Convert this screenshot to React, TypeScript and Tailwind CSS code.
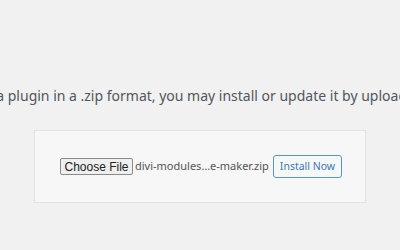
export default function App() {
  return (
    <div className="w-[400px] h-[250px] bg-[#f1f1f1] overflow-hidden relative" style={{ fontFamily: '"Noto Sans", "Open Sans", sans-serif' }}>
      <div className="pt-[86px] h-[130px] overflow-hidden">
        <p className="whitespace-nowrap text-[14px] leading-[20px] text-[#50575e] ml-[-80px] w-max">
          If you have a plugin in a .zip format, you may install or update it by uploading it here.
        </p>
      </div>
      <div className="mx-[34px] h-[73px] bg-[#f7f7f7] border border-[#e2e2e2] flex items-center justify-center">
        <div className="flex items-center whitespace-nowrap ml-[2px]">
          <span className="shrink-0 w-[73px] h-[17px] flex items-center justify-center bg-[#efefef] border border-[#8a8a8a] rounded-[2px] text-[12px] text-[#222]" style={{ fontFamily: '"Liberation Sans", Arial, sans-serif' }}>
            Choose File
          </span>
          <span className="shrink-0 ml-[2px] w-[130px] text-[11px] text-[#555]">divi-modules…e-maker.zip</span>
          <span className="shrink-0 ml-[8px] w-[69px] h-[23px] flex items-center justify-center bg-[#f6f7f7] border border-[#5b95c4] rounded-[3px] text-[10.5px] text-[#3a7ab3]">
            Install Now
          </span>
        </div>
      </div>
    </div>
  );
}
